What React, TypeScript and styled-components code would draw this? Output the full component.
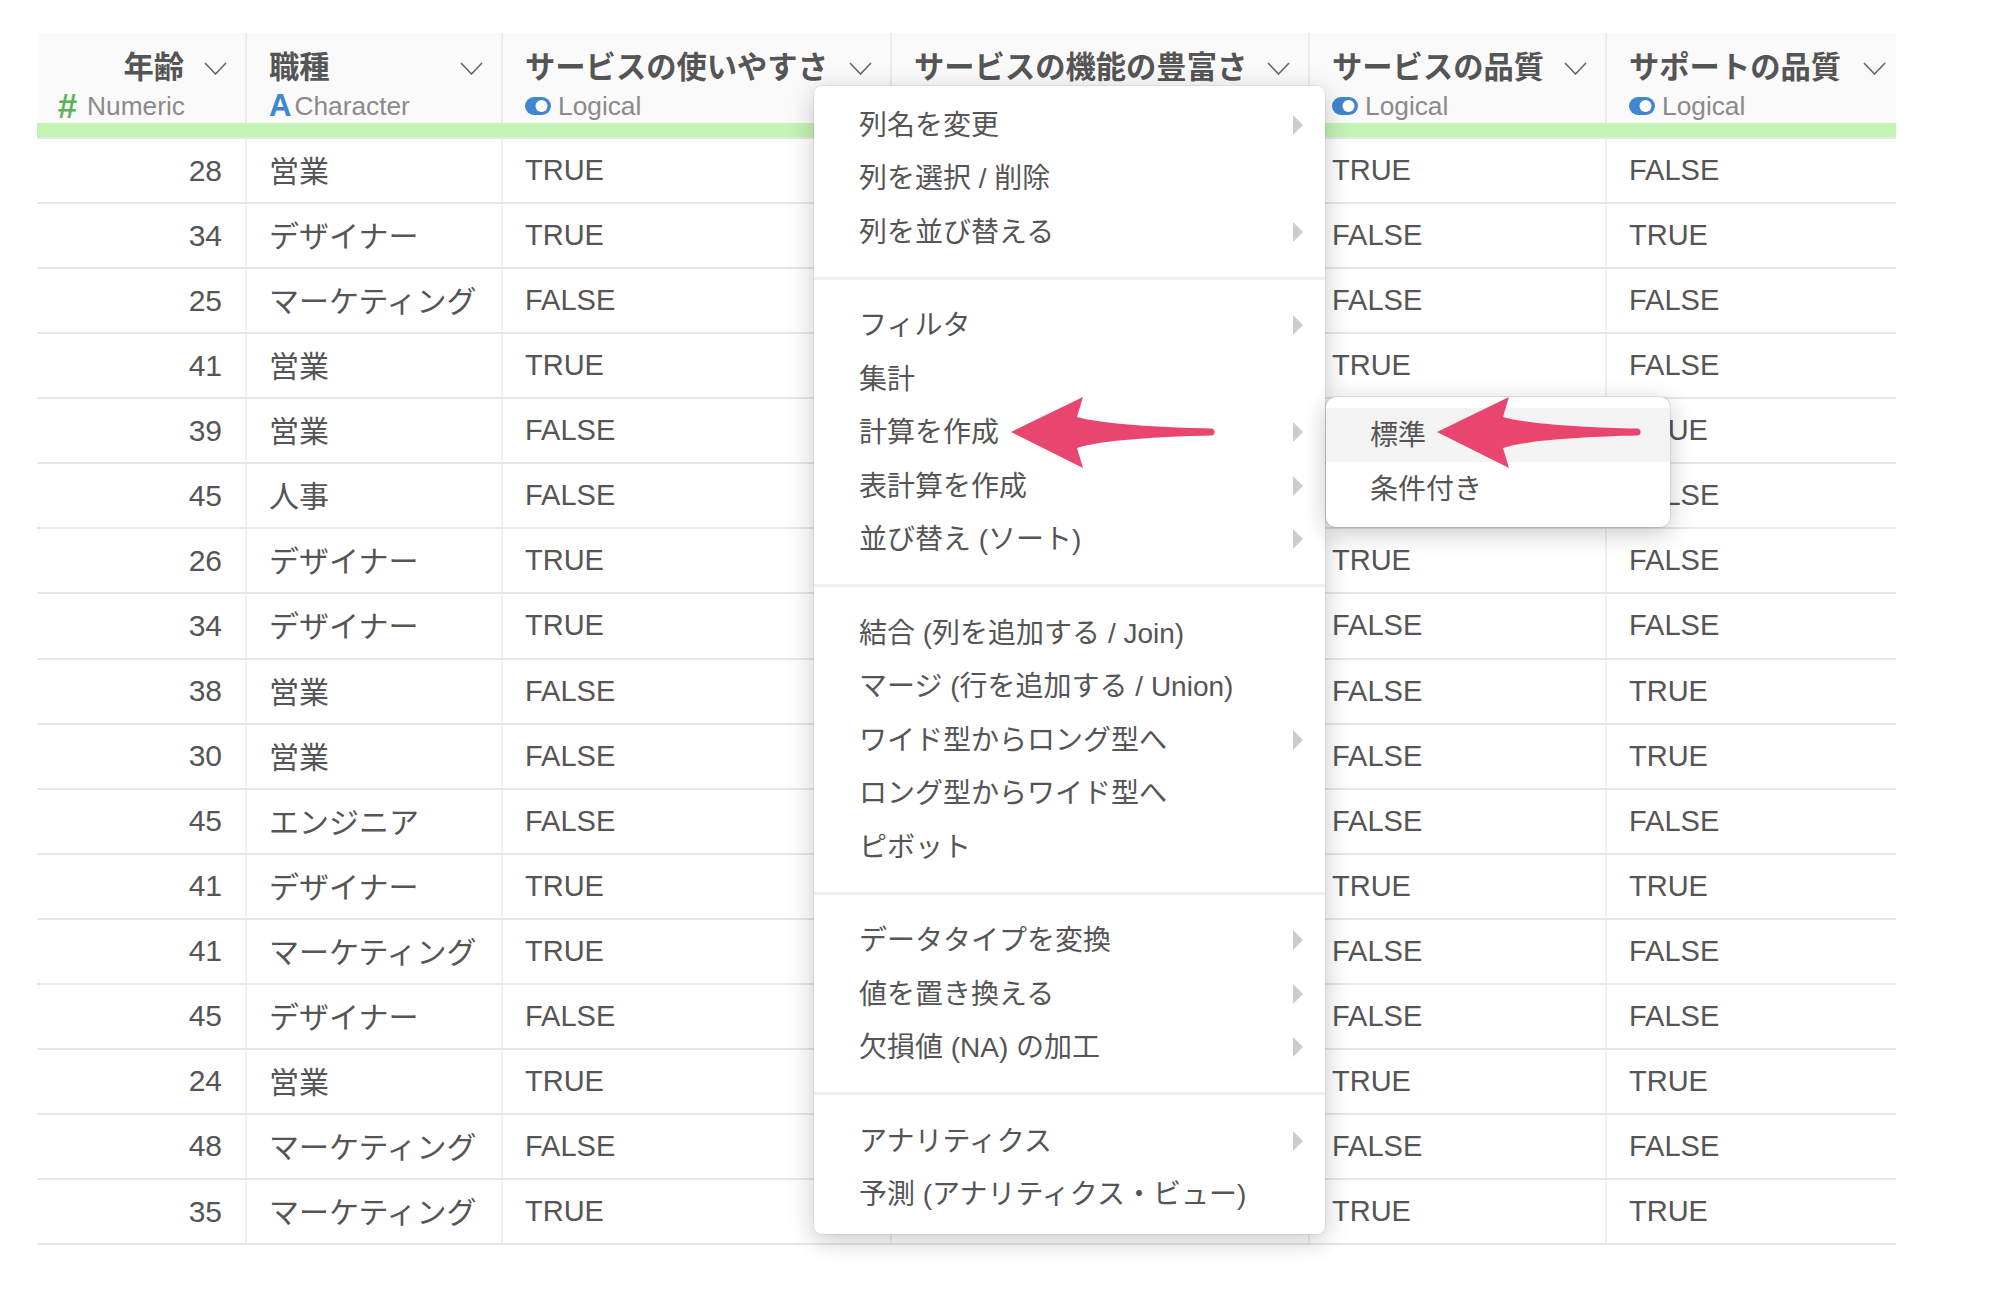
import React from "react";
import styled, { createGlobalStyle } from "styled-components";

const GlobalStyle = createGlobalStyle`
  html, body { margin: 0; padding: 0; background: #fff; }
  body { font-family: "Liberation Sans", "Noto Sans CJK JP", sans-serif; color: #555; }
`;

const Page = styled.div`
  position: relative;
  width: 2016px;
  height: 1290px;
  padding: 33px 0 0 37px;
  box-sizing: border-box;
  overflow: hidden;
`;

const COLUMNS = "210px 256px 389px 418px 297px 289px";

const Table = styled.div`
  width: 1859px;
  display: flex;
  flex-direction: column;
`;

const HeadRow = styled.div`
  display: grid;
  grid-template-columns: ${COLUMNS};
  height: 104px;
  background: #fafafa;
  border-bottom: 2px solid #e6e6e6;
  box-sizing: content-box;
`;

const HeadCell = styled.div`
  position: relative;
  display: flex;
  flex-direction: column;
  padding: 17px 18px 0 22px;
  box-sizing: border-box;
  border-right: 2px solid #ececec;
  &:last-child { border-right: 0; padding-right: 10px; }
  &::after {
    content: "";
    position: absolute;
    left: 0;
    right: -2px;
    bottom: 0;
    height: 14px;
    background: #c4f3b6;
  }
  &:last-child::after { right: 0; }
`;

const TitleLine = styled.div`
  display: flex;
  align-items: center;
  justify-content: space-between;
  height: 36px;
`;

const Title = styled.span<{ $right?: boolean }>`
  font-size: 30.3px;
  font-weight: 700;
  line-height: 36px;
  color: #555;
  white-space: nowrap;
  ${(p) => (p.$right ? "margin-left: auto; margin-right: 20px;" : "")}
`;

const Chevron = styled.svg`
  flex: none;
  width: 23px;
  height: 13px;
`;

const TypeLine = styled.div<{ $right?: boolean }>`
  display: flex;
  align-items: center;
  height: 32px;
  margin-top: 4px;
  font-size: 26.3px;
  color: #8a8a8a;
  white-space: nowrap;
  ${(p) => (p.$right ? "padding-right: 42px; justify-content: flex-end;" : "")}
`;

const TypeGlyph = styled.span<{ $color: string; $gap: number; $size: number }>`
  font-weight: 700;
  font-size: ${(p) => p.$size}px;
  line-height: 32px;
  color: ${(p) => p.$color};
  margin-right: ${(p) => p.$gap}px;
`;

const LogicalIcon = styled.svg`
  flex: none;
  width: 26px;
  height: 18px;
  margin-right: 7px;
`;

const Body = styled.div`
  height: 1106px;
  display: flex;
  flex-direction: column;
`;

const Row = styled.div`
  flex: 1;
  display: grid;
  grid-template-columns: ${COLUMNS};
  border-bottom: 2px solid #e6e6e6;
`;

const Cell = styled.div`
  display: flex;
  align-items: center;
  padding: 0 22px;
  font-size: 29px;
  color: #555;
  white-space: nowrap;
  box-sizing: border-box;
  border-right: 2px solid #f0f0f0;
  &:last-child { border-right: 0; }
`;

const NumberCell = styled(Cell)`
  justify-content: flex-end;
  padding-right: 23px;
  font-size: 30px;
`;

const JobCell = styled(Cell)`
  font-size: 30px;
  padding-bottom: 3px;
`;

const Menu = styled.div`
  position: absolute;
  left: 814px;
  top: 86px;
  width: 511px;
  height: 1148px;
  box-sizing: border-box;
  padding: 10px 0 0;
  background: #fff;
  border-radius: 8px;
  box-shadow: 0 0 0 1px rgba(0, 0, 0, 0.06), 0 6px 26px rgba(0, 0, 0, 0.22);
`;

const MenuGroup = styled.div`
  padding-bottom: 20px;
  & + & {
    border-top: 3px solid #eeeeee;
    padding-top: 17px;
  }
  &:last-child { padding-bottom: 0; }
`;

const MenuItem = styled.div`
  position: relative;
  height: 53.5px;
  display: flex;
  align-items: center;
  justify-content: space-between;
  padding: 0 22px 0 45px;
  font-size: 28px;
  color: #555;
  white-space: nowrap;
`;

const Caret = styled.span`
  width: 0;
  height: 0;
  margin-top: 4px;
  border-style: solid;
  border-width: 10px 0 10px 10px;
  border-color: transparent transparent transparent #cccccc;
`;

const SubMenu = styled.div`
  position: absolute;
  left: 1326px;
  top: 397px;
  width: 344px;
  height: 130px;
  box-sizing: border-box;
  padding-top: 11px;
  background: #fff;
  border-radius: 10px;
  box-shadow: 0 0 0 1px rgba(0, 0, 0, 0.08), 0 6px 24px rgba(0, 0, 0, 0.22);
`;

const SubItem = styled.div<{ $active?: boolean }>`
  height: 54px;
  box-sizing: border-box;
  display: flex;
  align-items: center;
  padding: 0 0 4px 44px;
  font-size: 28px;
  color: #555;
  background: ${(p) => (p.$active ? "#f3f3f3" : "transparent")};
`;

const Arrow = styled.svg<{ $x: number }>`
  position: absolute;
  left: ${(p) => p.$x}px;
  top: 397px;
  width: 204px;
  height: 72px;
`;

const ChevronIcon = () => (
  <Chevron viewBox="0 0 23 13">
    <path d="M1 1 L11.5 12 L22 1" fill="none" stroke="#666" strokeWidth="1.6" />
  </Chevron>
);

const ArrowShape = ({ x }: { x: number }) => (
  <Arrow $x={x} viewBox="0 0 204 72">
    <path
      d="M0 35 L72 0 L66 20 C90 27 150 30.500 200 31.500 A3.500 3.500 0 0 1 200 38.500 C150 39.500 90 43 66 51 L72 71 Z"
      fill="#e9466f"
    />
  </Arrow>
);

type Col = { title: string; kind: "n" | "c" | "l"; right?: boolean };

const cols: Col[] = [
  { title: "年齢", kind: "n", right: true },
  { title: "職種", kind: "c" },
  { title: "サービスの使いやすさ", kind: "l" },
  { title: "サービスの機能の豊富さ", kind: "l" },
  { title: "サービスの品質", kind: "l" },
  { title: "サポートの品質", kind: "l" },
];

const T = "TRUE";
const F = "FALSE";
const rows: [number, string, string, string, string, string][] = [
  [28, "営業", T, T, T, F],
  [34, "デザイナー", T, F, F, T],
  [25, "マーケティング", F, F, F, F],
  [41, "営業", T, T, T, F],
  [39, "営業", F, T, T, T],
  [45, "人事", F, F, F, F],
  [26, "デザイナー", T, T, T, F],
  [34, "デザイナー", T, F, F, F],
  [38, "営業", F, F, F, T],
  [30, "営業", F, F, F, T],
  [45, "エンジニア", F, F, F, F],
  [41, "デザイナー", T, T, T, T],
  [41, "マーケティング", T, F, F, F],
  [45, "デザイナー", F, F, F, F],
  [24, "営業", T, T, T, T],
  [48, "マーケティング", F, F, F, F],
  [35, "マーケティング", T, T, T, T],
];

const menuGroups: { label: string; sub?: boolean }[][] = [
  [
    { label: "列名を変更", sub: true },
    { label: "列を選択 / 削除" },
    { label: "列を並び替える", sub: true },
  ],
  [
    { label: "フィルタ", sub: true },
    { label: "集計" },
    { label: "計算を作成", sub: true },
    { label: "表計算を作成", sub: true },
    { label: "並び替え (ソート)", sub: true },
  ],
  [
    { label: "結合 (列を追加する / Join)" },
    { label: "マージ (行を追加する / Union)" },
    { label: "ワイド型からロング型へ", sub: true },
    { label: "ロング型からワイド型へ" },
    { label: "ピボット" },
  ],
  [
    { label: "データタイプを変換", sub: true },
    { label: "値を置き換える", sub: true },
    { label: "欠損値 (NA) の加工", sub: true },
  ],
  [
    { label: "アナリティクス", sub: true },
    { label: "予測 (アナリティクス・ビュー)" },
  ],
];

const TypeLabel = ({ kind, right }: { kind: Col["kind"]; right?: boolean }) => (
  <TypeLine $right={right}>
    {kind === "n" && (
      <>
        <TypeGlyph $color="#5cb25c" $gap={10} $size={35}>#</TypeGlyph>Numeric
      </>
    )}
    {kind === "c" && (
      <>
        <TypeGlyph $color="#3f87d0" $gap={3} $size={31}>A</TypeGlyph>Character
      </>
    )}
    {kind === "l" && (
      <>
        <LogicalIcon viewBox="0 0 26 18">
          <rect width="26" height="18" rx="9" fill="#3f87d0" />
          <circle cx="16.500" cy="9" r="6" fill="#fff" />
        </LogicalIcon>
        Logical
      </>
    )}
  </TypeLine>
);

export default function App() {
  return (
    <Page>
      <GlobalStyle />
      <Table>
        <HeadRow>
          {cols.map((c) => (
            <HeadCell key={c.title}>
              <TitleLine>
                <Title $right={c.right}>{c.title}</Title>
                <ChevronIcon />
              </TitleLine>
              <TypeLabel kind={c.kind} right={c.right} />
            </HeadCell>
          ))}
        </HeadRow>
        <Body>
          {rows.map((r, i) => (
            <Row key={i}>
              <NumberCell>{r[0]}</NumberCell>
              <JobCell>{r[1]}</JobCell>
              {r.slice(2).map((v, j) => (
                <Cell key={j}>{v}</Cell>
              ))}
            </Row>
          ))}
        </Body>
      </Table>

      <Menu>
        {menuGroups.map((g, i) => (
          <MenuGroup key={i}>
            {g.map((m) => (
              <MenuItem key={m.label}>
                {m.label}
                {m.sub && <Caret />}
              </MenuItem>
            ))}
          </MenuGroup>
        ))}
      </Menu>

      <SubMenu>
        <SubItem $active>標準</SubItem>
        <SubItem>条件付き</SubItem>
      </SubMenu>

      <ArrowShape x={1011} />
      <ArrowShape x={1437} />
    </Page>
  );
}
